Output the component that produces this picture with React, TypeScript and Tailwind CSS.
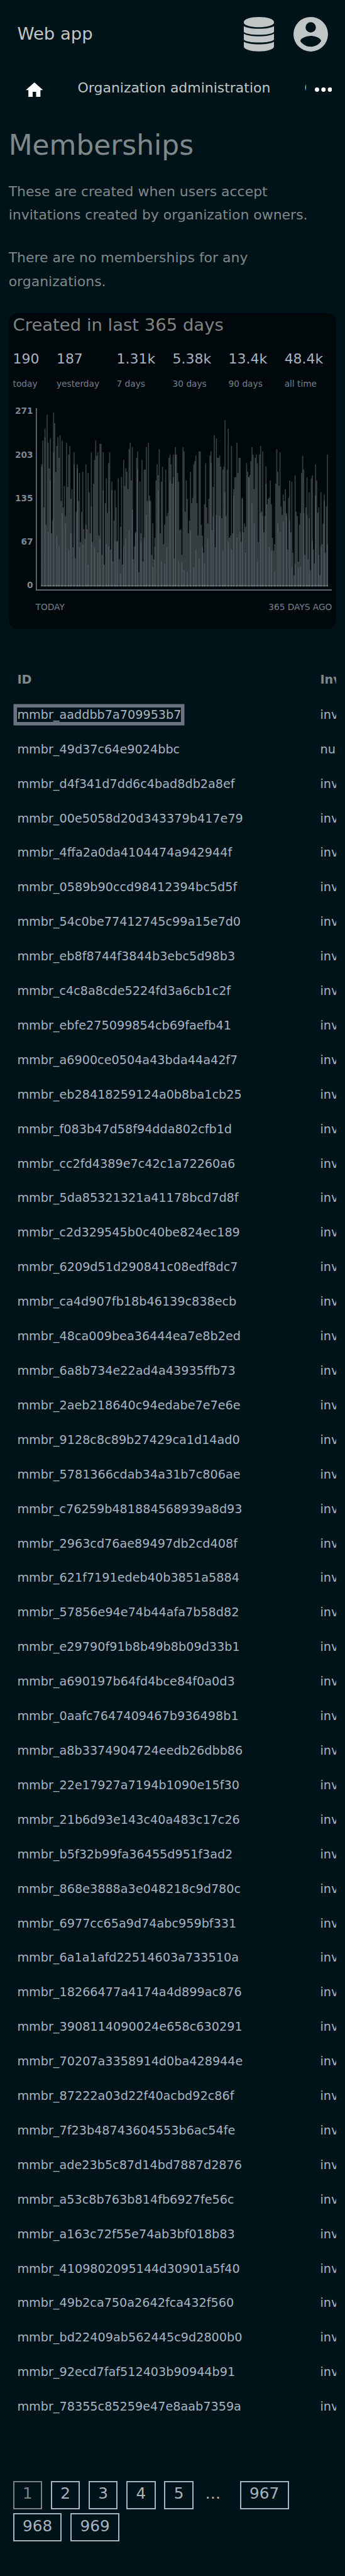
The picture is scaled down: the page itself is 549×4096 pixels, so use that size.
const FONT = "font-['DejaVu_Sans',sans-serif]";

const IDS = [
  'aaddbb7a709953b7', '49d37c64e9024bbc', 'd4f341d7dd6c4bad8db2a8ef', '00e5058d20d343379b417e79',
  '4ffa2a0da4104474a942944f', '0589b90ccd98412394bc5d5f', '54c0be77412745c99a15e7d0', 'eb8f8744f3844b3ebc5d98b3',
  'c4c8a8cde5224fd3a6cb1c2f', 'ebfe275099854cb69faefb41', 'a6900ce0504a43bda44a42f7', 'eb28418259124a0b8ba1cb25',
  'f083b47d58f94dda802cfb1d', 'cc2fd4389e7c42c1a72260a6', '5da85321321a41178bcd7d8f', 'c2d329545b0c40be824ec189',
  '6209d51d290841c08edf8dc7', 'ca4d907fb18b46139c838ecb', '48ca009bea36444ea7e8b2ed', '6a8b734e22ad4a43935ffb73',
  '2aeb218640c94edabe7e7e6e', '9128c8c89b27429ca1d14ad0', '5781366cdab34a31b7c806ae', 'c76259b481884568939a8d93',
  '2963cd76ae89497db2cd408f', '621f7191edeb40b3851a5884', '57856e94e74b44afa7b58d82', 'e29790f91b8b49b8b09d33b1',
  'a690197b64fd4bce84f0a0d3', '0aafc7647409467b936498b1', 'a8b3374904724eedb26dbb86', '22e17927a7194b1090e15f30',
  '21b6d93e143c40a483c17c26', 'b5f32b99fa36455d951f3ad2', '868e3888a3e048218c9d780c', '6977cc65a9d74abc959bf331',
  '6a1a1afd22514603a733510a', '18266477a4174a4d899ac876', '3908114090024e658c630291', '70207a3358914d0ba428944e',
  '87222a03d22f40acbd92c86f', '7f23b48743604553b6ac54fe', 'ade23b5c87d14bd7887d2876', 'a53c8b763b814fb6927fe56c',
  'a163c72f55e74ab3bf018b83', '4109802095144d30901a5f40', '49b2ca750a2642fca432f560', 'bd22409ab562445c9d2800b0',
  '92ecd7faf512403b90944b91', '78355c85259e47e8aab7359a',
];

// Column tops, left to right; "a/b" marks a column where a second bar overlaps from b down.
const BARS = `360/372 228 600 162/210 696 84 240/738 384 216/450 744 672 72/294 132 402 258/756 210 324/816 198 564 228/630
600 480 648/690 240 486 306/834 258 552/744 498 822 294/360 882 624 360/384 564 408/822 792 624 402/804 720
774 360/696 720 408/918 516 744 294/594 792 468 336/822 228 312 294/852 756 246/774 246 864 294/504 918 576
438/804 630 354/816 294 834 456/504 900 672 504/786 600 786/792 438 888 708/966 432 918 336/816 480 384/774 402
498 276/726 240 450 264/612 888 816 738/744 324 288/390 960 456 744/792 336 900 390/768 390 264/642 564 240
534/564 564 864 690/930 888 768/816 450 360 420/504 276 744 456/900 372 804 696/912 390 648/822 630 324 306/450
360 468 306/432 882 264/306 306 408 456/900 726 720 864/900 264 288/948 624 450 552/960 744 672 402/726 576
546 360/936 342 312/834 576 756 288/882 288 696 756/822 852 582/912 354 600 690/774 552 312 288/354 726 486/648
198 822 216/642 324 324 312/648 372 660 390/840 372 114/516 648 390 162/792 768 756 258/834 744 498/534 432
432 240/768 408 324 324/738 792 546/552 738 690 708/852 354 402 432/432 420 342 264/576 306 498/690 324 306
354/900 792 306 258/630 624 288/648 738 648 372/468 582 552 546/822 450 582/840 768 840 804/960 468 276 402/690
480 294/738 594 642 528/678 564 498 630/648 834 546 450/672 738 456/930 852 978 420/912 624 648 900/936 696
630/930 408 312 390/630 864 600 432/642 888 516/660 948 438 420/786 834 912 360/534 450 630 600/864 978 516/816
804 690 528/564 852 594 306/804`
  .split(/\s+/)
  .map((s) => s.split('/').map(Number));

const BASE = 1038;
const outline = 'M228 1038' + BARS.map(([t], i) => `V${t}H${234 + i * 6}`).join('') + `V${BASE}Z`;
const overlap = BARS.map(([, b], i) => (b ? `M${228 + i * 6} ${b}h6V${BASE}h-6Z` : '')).join('');
const feet = BARS.map(([, b], i) => (b ? `M${228 + i * 6} 1032h6v6h-6Z` : '')).join('');

function Chart() {
  return (
    <svg viewBox="198 48 1650 1014" className="block h-[290px] w-[471.8px]" preserveAspectRatio="none">
      <path d={outline} fill="#363d41" />
      <path d={overlap} fill="#4d565d" />
      <path d="M228 1032H1824V1038H228Z" fill="#576366" />
      <path d={feet} fill="#818d90" />
      <path d="M198 48h6V1056H1848v6H198Z" fill="#6b7280" />
    </svg>
  );
}

function Stat({ value, label }: { value: string; label: string }) {
  return (
    <div>
      <div className="text-[21.96px] leading-[37.7px] text-[#a7b3c1]">{value}</div>
      <div className="mt-[8.1px] text-[13.73px] leading-[24px] text-[#74808b]">{label}</div>
    </div>
  );
}

function PageBox({ n, current }: { n: string; current?: boolean }) {
  return (
    <div
      className={
        current
          ? 'flex h-[45px] items-center border-2 border-[#7a8282] px-[13.4px] pb-[3px] text-[#7a8282]'
          : 'flex h-[45px] items-center border-2 border-[#a7b3c1] px-[13.4px] pb-[3px] text-[#a7b3c1]'
      }
    >
      {n}
    </div>
  );
}

export default function App() {
  return (
    <div className={`h-[4096px] w-[549px] overflow-hidden bg-[#001318] text-[#7f888a] ${FONT}`}>
      <header className="flex h-[109.8px] items-center pr-[27.5px] pl-[27.4px] text-[#c0c6c6]">
        <div className="flex-1 pb-[2px] text-[27.45px] leading-none">Web app</div>
        <svg viewBox="0 0 168 192" className="mr-[30.9px] h-[54.9px] w-[48px]" fill="currentColor">
          <path d="M0 28C0 12 38 0 84 0s84 12 84 28v6c-6 14-42 23-84 23S6 48 0 34Z" />
          <path d="M0 51c16 10 48 15 84 15s68-5 84-15v32c-8 10-42 16-84 16S8 93 0 83Z" />
          <path d="M0 93c16 10 48 15 84 15s68-5 84-15v33c-8 10-42 16-84 16S8 136 0 126Z" />
          <path d="M0 137c16 10 48 15 84 15s68-5 84-15v27c0 16-38 28-84 28S0 180 0 164Z" />
        </svg>
        <svg viewBox="2 2 20 20" className="h-[54.9px] w-[54.9px]" fill="currentColor">
          <path d="M12 19.2c-2.5 0-4.71-1.28-6-3.2.03-2 4-3.1 6-3.1s5.97 1.1 6 3.1c-1.29 1.92-3.5 3.2-6 3.2M12 5a3 3 0 0 1 3 3 3 3 0 0 1-3 3 3 3 0 0 1-3-3 3 3 0 0 1 3-3m0-3A10 10 0 0 0 2 12a10 10 0 0 0 10 10 10 10 0 0 0 10-10c0-5.53-4.5-10-10-10" />
        </svg>
      </header>
      <nav className="flex h-[65.2px] items-center pl-[41.2px]">
        <svg viewBox="2 3 20 17" className="h-[23.3px] w-[27.5px]" fill="#fff">
          <path d="M10 20v-6h4v6h5v-8h3L12 3 2 12h3v8z" />
        </svg>
        <div className="ml-[54.9px] flex w-[363.4px] gap-[54px] overflow-hidden pb-[5px] text-[21.96px] leading-[30px] whitespace-nowrap text-[#c0c6c6]">
          <span>Organization administration</span>
          <span>O</span>
        </div>
        <svg viewBox="4 10 16 4" className="ml-[13.7px] h-[6.9px] w-[27.5px]" fill="#fff">
          <circle cx="6" cy="12" r="2" />
          <circle cx="12" cy="12" r="2" />
          <circle cx="18" cy="12" r="2" />
        </svg>
      </nav>
      <main className="px-[13.7px]">
        <h1 className="mt-[19.5px] text-[43.93px] leading-[74.7px]">Memberships</h1>
        <p className="mt-[16.8px] text-[21.96px] leading-[37.4px]">
          These are created when users accept
          <br />
          invitations created by organization owners.
        </p>
        <p className="mt-[30.3px] text-[21.96px] leading-[37.4px]">
          There are no memberships for any
          <br />
          organizations.
        </p>
        <section className="mt-[31.9px] h-[502.5px] rounded-[14px] bg-[#00080b] pt-[2.6px] pr-[6.9px] pl-[6.9px]">
          <h2 className="text-[27.45px] leading-[34.3px] text-[#7f8485]">Created in last 365 days</h2>
          <div className="mt-[17.5px] flex gap-[27.45px]">
            <Stat value="190" label="today" />
            <Stat value="187" label="yesterday" />
            <Stat value="1.31k" label="7 days" />
            <Stat value="5.38k" label="30 days" />
            <Stat value="13.4k" label="90 days" />
            <Stat value="48.4k" label="all time" />
          </div>
          <div className="mt-[26.8px] flex">
            <div className="-mt-[1.3px] mb-[1.3px] flex w-[36px] flex-col justify-between pr-[4px] text-right text-[13.73px] leading-[13.7px] font-bold text-[#7d8893]">
              <span>271</span>
              <span>203</span>
              <span>135</span>
              <span>67</span>
              <span>0</span>
            </div>
            <Chart />
          </div>
          <div className="mt-[14px] flex justify-between pl-[36px] text-[13.73px] leading-[24px] text-[#74808b]">
            <span>TODAY</span>
            <span>365 DAYS AGO</span>
          </div>
        </section>
        <div className="mt-[53.4px] overflow-hidden pl-[13.7px] text-[19.22px] leading-[22.3px] whitespace-nowrap">
          <div className="flex h-[55.8px] items-center font-bold">
            <span className="w-[482.1px] shrink-0">ID</span>
            <span>Inv</span>
          </div>
          {IDS.map((id, i) => (
            <div key={id} className="flex h-[54.91px] items-center text-[#a7b3c1]">
              <div className="w-[482.1px] shrink-0">
                <span className={i === 0 ? 'shadow-[0_0_0_5.5px_#6b7280]' : ''}>mmbr_{id}</span>
              </div>
              <span>{i === 1 ? 'nu' : 'inv'}</span>
            </div>
          ))}
        </div>
        <div className="mt-[89.8px] flex flex-wrap gap-x-[13.7px] gap-y-[6.4px] pl-[6.9px] text-[24.7px] leading-none">
          <PageBox n="1" current />
          <PageBox n="2" />
          <PageBox n="3" />
          <PageBox n="4" />
          <PageBox n="5" />
          <div className="flex h-[45px] w-[46.5px] items-center pb-[3px] pl-[5px] text-[#a7b3c1]">…</div>
          <PageBox n="967" />
          <PageBox n="968" />
          <PageBox n="969" />
        </div>
      </main>
    </div>
  );
}
